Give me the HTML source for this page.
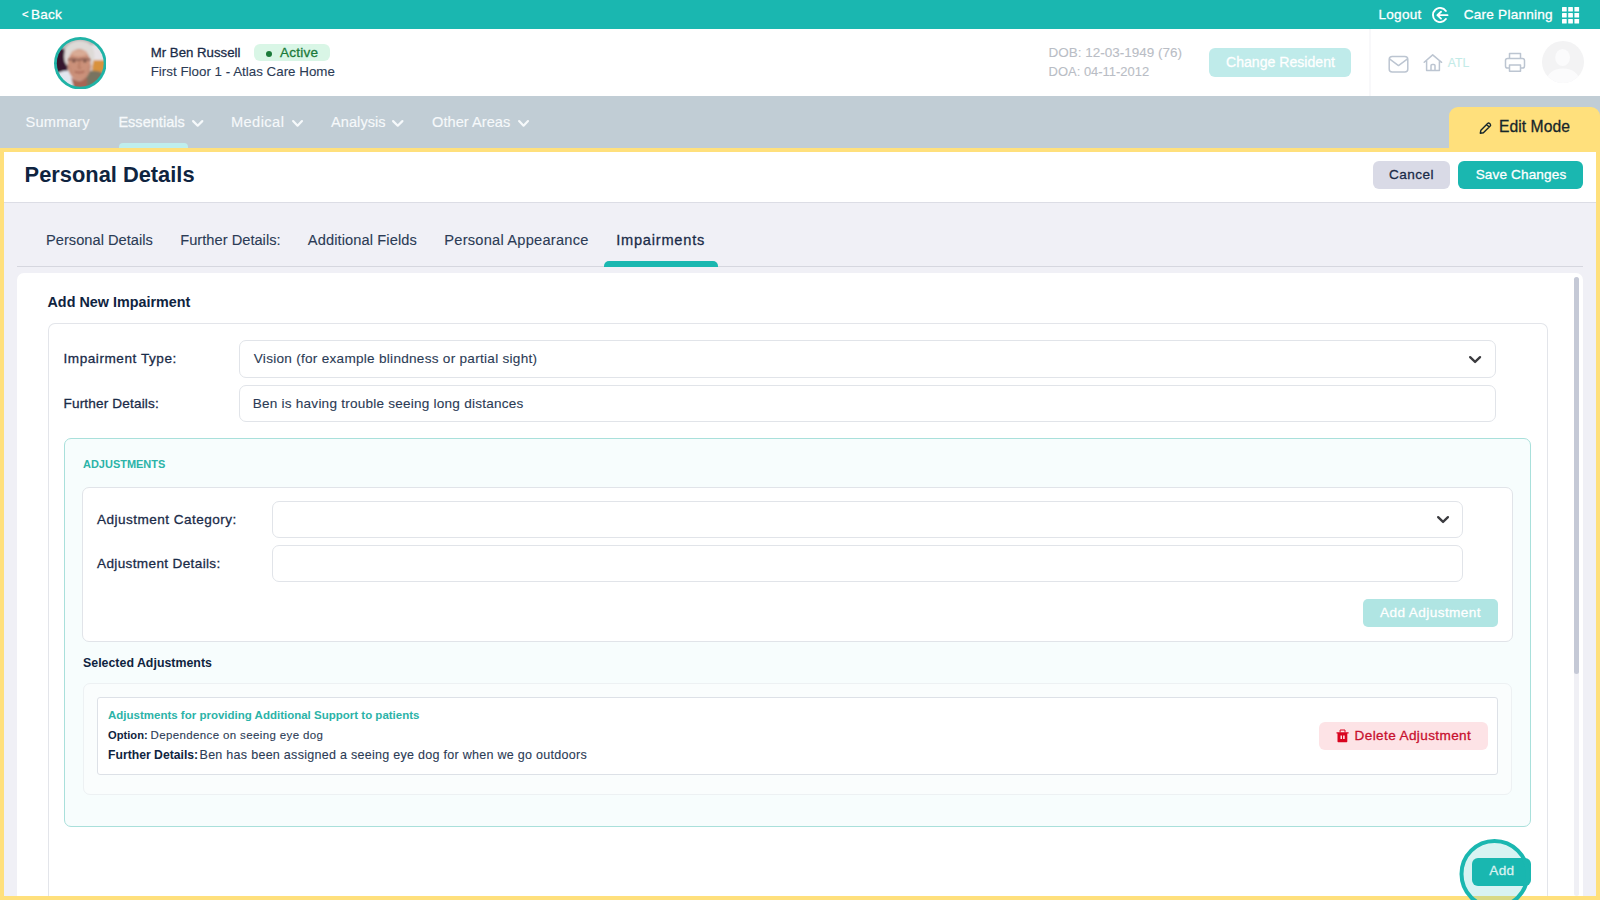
<!DOCTYPE html>
<html lang="en">
<head>
<meta charset="utf-8">
<title>Personal Details - Impairments</title>
<style>
html,body{margin:0;padding:0}
body{width:1600px;height:900px;overflow:hidden;position:relative;background:#f0f0f6;font-family:"Liberation Sans",sans-serif;}
div,span,svg.a,button,header,nav,section,h1,h2,h3,label,a,p,b{position:absolute;box-sizing:border-box;margin:0;padding:0}
.t{line-height:1;white-space:nowrap;display:block}
button{border:0;font:inherit}
.fld{background:#fff;border:1px solid #e1e4e9;border-radius:7px}
</style>
</head>
<body>
<header style="left:0;top:0;width:1600px;height:29px;background:#1ab7b0"><a class="t" style="left:22.00px;top:8.96px;font-size:11.15px;font-weight:400;letter-spacing:0.000px;color:#ffffff;-webkit-text-stroke:0.28px #ffffff;">&lt;</a><a class="t" style="left:31.00px;top:7.60px;font-size:13.58px;font-weight:400;letter-spacing:0.201px;color:#ffffff;-webkit-text-stroke:0.28px #ffffff;">Back</a><a class="t" style="left:1378.50px;top:7.70px;font-size:13.58px;font-weight:400;letter-spacing:0.248px;color:#ffffff;-webkit-text-stroke:0.28px #ffffff;">Logout</a><svg class="a" style="left:1431px;top:7px" width="18" height="16" viewBox="0 0 18 16"><path d="M14.87 3.93 A7.1 7.1 0 1 0 14.87 12.07" fill="none" stroke="#fff" stroke-width="1.9" stroke-linecap="round"/><path d="M16.5 8.15 H7.2 M10 4.7 L6.4 8.15 L10 11.6" fill="none" stroke="#fff" stroke-width="1.9" stroke-linecap="round" stroke-linejoin="round"/></svg><a class="t" style="left:1463.80px;top:7.70px;font-size:13.58px;font-weight:400;letter-spacing:0.225px;color:#ffffff;-webkit-text-stroke:0.28px #ffffff;">Care Planning</a><svg class="a" style="left:1562.2px;top:6.8px" width="18" height="17" viewBox="0 0 18 17"><rect x="0.0" y="0.0" width="4.7" height="4.5" rx="0.5" fill="#fff"/><rect x="0.0" y="6.0" width="4.7" height="4.5" rx="0.5" fill="#fff"/><rect x="0.0" y="12.0" width="4.7" height="4.5" rx="0.5" fill="#fff"/><rect x="6.2" y="0.0" width="4.7" height="4.5" rx="0.5" fill="#fff"/><rect x="6.2" y="6.0" width="4.7" height="4.5" rx="0.5" fill="#fff"/><rect x="6.2" y="12.0" width="4.7" height="4.5" rx="0.5" fill="#fff"/><rect x="12.4" y="0.0" width="4.7" height="4.5" rx="0.5" fill="#fff"/><rect x="12.4" y="6.0" width="4.7" height="4.5" rx="0.5" fill="#fff"/><rect x="12.4" y="12.0" width="4.7" height="4.5" rx="0.5" fill="#fff"/></svg></header>
<section style="left:0;top:29px;width:1600px;height:67px;background:#fff"></section><svg class="a" style="left:53.5px;top:36.8px" width="52.5" height="52.5" viewBox="0 0 52 52">
<defs><clipPath id="av"><circle cx="26" cy="26" r="23.2"/></clipPath><filter id="bl" x="-20%" y="-20%" width="140%" height="140%"><feGaussianBlur stdDeviation="1.1"/></filter><filter id="bl2" x="-30%" y="-30%" width="160%" height="160%"><feGaussianBlur stdDeviation="1.0"/></filter></defs>
<circle cx="26" cy="26" r="26" fill="#1fb3a6"/>
<g clip-path="url(#av)"><g filter="url(#bl)">
<rect x="0" y="0" width="52" height="52" fill="#cfc6c4"/>
<rect x="0" y="0" width="52" height="14" fill="#bdb6b6"/>
<path d="M0 10 L10 12 L14 24 L13 37 L0 41 Z" fill="#34162f"/>
<rect x="36" y="8" width="16" height="16" fill="#e7e3e6"/>
<rect x="38" y="23" width="14" height="12" fill="#d8923c"/>
<path d="M0 52 V38 Q8 32 17 34 L22 52 Z" fill="#e3e7f0"/>
<path d="M26 52 L31 35 Q42 31 52 38 V52 Z" fill="#787361"/>
<path d="M10.5 24 Q7.5 6 24 3.6 Q40.5 3.4 40 20 L38 28 L12.5 28 Z" fill="#dedad7"/>
<ellipse cx="25" cy="27.6" rx="11.4" ry="15.6" fill="#cb917a"/>
<ellipse cx="25" cy="16" rx="8" ry="3.2" fill="#d9ab95"/>
<path d="M17 40 Q25 47 33 40 L32 52 H20 Z" fill="#a86552"/>
</g>
<g filter="url(#bl2)">
<path d="M14 22.6 Q19 21 24 23 Q30 21 36 22.6" fill="none" stroke="#8b5f52" stroke-width="1.8"/>
<ellipse cx="19.6" cy="24" rx="1.6" ry="0.9" fill="#5a3a33"/><ellipse cx="30.6" cy="24" rx="1.6" ry="0.9" fill="#5a3a33"/>
<path d="M25.6 24 L24.4 30.5 L27 30.8" fill="none" stroke="#b67a63" stroke-width="1.6"/>
<path d="M20.5 34.3 Q25 36.3 30 34" fill="none" stroke="#a3604f" stroke-width="1.5"/>
<path d="M15 28 Q16 33 18.5 36 M35 28 Q34.5 33 32 36" fill="none" stroke="#bb846d" stroke-width="0.9"/>
</g></g></svg><b class="t" style="left:150.70px;top:46.11px;font-size:13.22px;font-weight:400;letter-spacing:0.009px;color:#1a2b48;-webkit-text-stroke:0.28px #1a2b48;">Mr Ben Russell</b><div style="left:254px;top:44.3px;width:76px;height:16.900000000000006px;background:#d9f6e6;border-radius:6px"></div><div style="left:266.2px;top:50.6px;width:6.0px;height:6.0px;background:#1b7a3a;border-radius:50%"></div><span class="t" style="left:280.00px;top:45.80px;font-size:13.58px;font-weight:400;letter-spacing:0.235px;color:#1b7a3a;-webkit-text-stroke:0.28px #1b7a3a;">Active</span><span class="t" style="left:150.70px;top:64.99px;font-size:13.35px;font-weight:400;letter-spacing:0.010px;color:#2b3b55;-webkit-text-stroke:0.1px #2b3b55;">First Floor 1 - Atlas Care Home</span><span class="t" style="left:1048.60px;top:45.99px;font-size:13.48px;font-weight:400;letter-spacing:0.012px;color:#b9bdc5;-webkit-text-stroke:0.1px #b9bdc5;">DOB: 12-03-1949 (76)</span><span class="t" style="left:1048.60px;top:65.63px;font-size:12.96px;font-weight:400;letter-spacing:0.003px;color:#b9bdc5;-webkit-text-stroke:0.1px #b9bdc5;">DOA: 04-11-2012</span><button style="left:1209px;top:48px;width:142px;height:28.5px;background:#bfebea;border-radius:6px"></button><span class="t" style="left:1226.00px;top:55.09px;font-size:14.07px;font-weight:400;letter-spacing:0.017px;color:#ffffff;-webkit-text-stroke:0.28px #ffffff;">Change Resident</span><div style="left:1369px;top:29px;width:2px;height:67px;background:#f8f8fa"></div><svg class="a" style="left:1387px;top:54px" width="23" height="20" viewBox="0 0 23 20"><rect x="2.2" y="2.5" width="18.6" height="15.4" rx="3" fill="none" stroke="#bcc5d1" stroke-width="1.5"/><path d="M2.8 5.2 L11.5 11.6 L20.2 5.2" fill="none" stroke="#bcc5d1" stroke-width="1.5" stroke-linejoin="round"/></svg><svg class="a" style="left:1422px;top:53px" width="22" height="20" viewBox="0 0 22 20"><path d="M2.2 9.3 L10.7 1.9 L19.6 9.3 M4.6 7.8 V17.6 H17.4 V8.2 M9 17.4 V12.6 Q9 11.4 10.2 11.4 H11.8 Q13 11.4 13 12.6 V17.4" fill="none" stroke="#bcc5d1" stroke-width="1.5" stroke-linecap="round" stroke-linejoin="round"/></svg><span class="t" style="left:1447.75px;top:56.89px;font-size:12.17px;font-weight:400;letter-spacing:0.060px;color:#c3ebe8;-webkit-text-stroke:0.1px #c3ebe8;">ATL</span><svg class="a" style="left:1503px;top:51px" width="24" height="23" viewBox="0 0 24 23"><path d="M6.5 7.5 V2.5 H17.5 V7.5 M6.5 17 H4.6 Q2.5 17 2.5 14.9 V9.6 Q2.5 7.5 4.6 7.5 H19.4 Q21.5 7.5 21.5 9.6 V14.9 Q21.5 17 19.4 17 H17.5 M6.5 14 H17.5 V20.3 H6.5 Z" fill="none" stroke="#bcc5d1" stroke-width="1.5" stroke-linejoin="round"/></svg><svg class="a" style="left:1541.5px;top:41px" width="42" height="42" viewBox="0 0 42 42"><defs><clipPath id="uc"><circle cx="21" cy="21" r="21"/></clipPath></defs><circle cx="21" cy="21" r="21" fill="#f3f3f4"/><g clip-path="url(#uc)" fill="#fbfbfc"><ellipse cx="20.6" cy="16.5" rx="7.4" ry="8.6"/><path d="M3 46 Q4 27.5 21 27.5 Q38 27.5 39 46 Z"/></g></svg><nav style="left:0;top:96px;width:1600px;height:52px;background:#c1cdd5"></nav><a class="t" style="left:25.40px;top:115.11px;font-size:14.63px;font-weight:400;letter-spacing:0.257px;color:#f6f9fb;-webkit-text-stroke:0.15px #f6f9fb;">Summary</a><a class="t" style="left:118.40px;top:115.21px;font-size:14.51px;font-weight:400;letter-spacing:0.029px;color:#f6f9fb;-webkit-text-stroke:0.28px #f6f9fb;">Essentials</a><a class="t" style="left:230.90px;top:115.11px;font-size:14.63px;font-weight:400;letter-spacing:0.442px;color:#f6f9fb;-webkit-text-stroke:0.15px #f6f9fb;">Medical</a><a class="t" style="left:331.10px;top:115.18px;font-size:14.56px;font-weight:400;letter-spacing:0.044px;color:#f6f9fb;-webkit-text-stroke:0.15px #f6f9fb;">Analysis</a><a class="t" style="left:432.00px;top:115.14px;font-size:14.60px;font-weight:400;letter-spacing:0.040px;color:#f6f9fb;-webkit-text-stroke:0.15px #f6f9fb;">Other Areas</a><svg class="a" style="left:190px;top:118px" width="15.400000000000006" height="10.799999999999997" viewBox="-2 -2 15.400000000000006 10.799999999999997"><path d="M1.1 1.1 L5.700000000000003 5.6999999999999975 L10.300000000000006 1.1" fill="none" stroke="#f6f9fb" stroke-width="2.2" stroke-linecap="round" stroke-linejoin="round"/></svg><svg class="a" style="left:289.8px;top:118px" width="15.099999999999966" height="10.799999999999997" viewBox="-2 -2 15.099999999999966 10.799999999999997"><path d="M1.1 1.1 L5.549999999999983 5.6999999999999975 L9.999999999999966 1.1" fill="none" stroke="#f6f9fb" stroke-width="2.2" stroke-linecap="round" stroke-linejoin="round"/></svg><svg class="a" style="left:390.3px;top:118px" width="15.5" height="10.799999999999997" viewBox="-2 -2 15.5 10.799999999999997"><path d="M1.1 1.1 L5.75 5.6999999999999975 L10.4 1.1" fill="none" stroke="#f6f9fb" stroke-width="2.2" stroke-linecap="round" stroke-linejoin="round"/></svg><svg class="a" style="left:516.1px;top:118px" width="15.100000000000023" height="10.799999999999997" viewBox="-2 -2 15.100000000000023 10.799999999999997"><path d="M1.1 1.1 L5.550000000000011 5.6999999999999975 L10.000000000000023 1.1" fill="none" stroke="#f6f9fb" stroke-width="2.2" stroke-linecap="round" stroke-linejoin="round"/></svg><div style="left:118.5px;top:143px;width:69.69999999999999px;height:5px;background:#bfeeed;border-radius:4px 4px 0 0"></div><div style="left:1449px;top:106.5px;width:151px;height:45.5px;background:#ffe07c;border-radius:9px 9px 0 0"></div><svg class="a" style="left:1478px;top:121px" width="15" height="14" viewBox="0 0 15 14"><path d="M2.3 12.2 L2.9 9.2 L9.6 2.5 Q10.6 1.6 11.6 2.5 L12.2 3.1 Q13.1 4.1 12.2 5.1 L5.4 11.7 Z M8.6 3.6 L11.1 6.1" fill="none" stroke="#16262b" stroke-width="1.4" stroke-linejoin="round" stroke-linecap="round"/></svg><span class="t" style="left:1499.00px;top:119.44px;font-size:15.66px;font-weight:400;letter-spacing:0.047px;color:#16262b;-webkit-text-stroke:0.28px #16262b;">Edit Mode</span><div style="left:0px;top:148px;width:1600px;height:752px;border:4px solid #ffe07c;background:#f0f0f6"></div><div style="left:4px;top:152px;width:1592px;height:50.5px;background:#fff;border-bottom:1px solid #dcdde5"></div><h1 class="t" style="left:24.60px;top:163.50px;font-size:21.85px;font-weight:700;letter-spacing:-0.002px;color:#0f2440;">Personal Details</h1><button style="left:1372.5px;top:161px;width:77.5px;height:28px;background:#d9dae6;border-radius:6px"></button><span class="t" style="left:1389.00px;top:168.30px;font-size:13.58px;font-weight:400;letter-spacing:0.430px;color:#1a2b48;-webkit-text-stroke:0.28px #1a2b48;">Cancel</span><button style="left:1458px;top:161px;width:125.29999999999995px;height:28px;background:#1ab7b0;border-radius:6px"></button><span class="t" style="left:1475.70px;top:168.30px;font-size:13.58px;font-weight:400;letter-spacing:0.129px;color:#ffffff;-webkit-text-stroke:0.28px #ffffff;">Save Changes</span><a class="t" style="left:46.00px;top:232.61px;font-size:14.63px;font-weight:400;letter-spacing:0.022px;color:#2b3b55;-webkit-text-stroke:0.1px #2b3b55;">Personal Details</a><a class="t" style="left:180.25px;top:232.61px;font-size:14.63px;font-weight:400;letter-spacing:0.023px;color:#2b3b55;-webkit-text-stroke:0.1px #2b3b55;">Further Details:</a><a class="t" style="left:307.80px;top:232.61px;font-size:14.63px;font-weight:400;letter-spacing:0.106px;color:#2b3b55;-webkit-text-stroke:0.1px #2b3b55;">Additional Fields</a><a class="t" style="left:444.30px;top:232.61px;font-size:14.63px;font-weight:400;letter-spacing:0.232px;color:#2b3b55;-webkit-text-stroke:0.1px #2b3b55;">Personal Appearance</a><a class="t" style="left:616.20px;top:232.61px;font-size:14.63px;font-weight:400;letter-spacing:0.765px;color:#1a2b48;-webkit-text-stroke:0.28px #1a2b48;">Impairments</a><div style="left:17px;top:265.8px;width:1566px;height:1.5px;background:#d6d7df"></div><div style="left:604px;top:261.3px;width:113.5px;height:6.0px;background:#1ab7b0;border-radius:5px 5px 0 0"></div><div style="left:17px;top:272.5px;width:1566px;height:623.5px;background:#fff;border-radius:7px 7px 0 0"></div><div style="left:1574px;top:277px;width:5.2000000000000455px;height:619px;background:#f0f0f5;border-radius:3px"></div><div style="left:1574px;top:277.3px;width:5.2000000000000455px;height:396.3px;background:#c5c9d6;border-radius:3px"></div><h2 class="t" style="left:47.50px;top:294.61px;font-size:14.34px;font-weight:700;letter-spacing:0.016px;color:#0f2440;">Add New Impairment</h2><div style="left:47.5px;top:322.6px;width:1500.5px;height:573.4px;border:1px solid #e3e5ea;border-bottom:0;border-radius:7px 7px 0 0"></div><label class="t" style="left:63.50px;top:352.25px;font-size:13.58px;font-weight:400;letter-spacing:0.542px;color:#1a2b48;-webkit-text-stroke:0.28px #1a2b48;">Impairment Type:</label><div class="fld" style="left:239px;top:340px;width:1256.5px;height:37.60000000000002px;"></div><span class="t" style="left:253.75px;top:352.25px;font-size:13.58px;font-weight:400;letter-spacing:0.274px;color:#2b3b55;-webkit-text-stroke:0.1px #2b3b55;">Vision (for example blindness or partial sight)</span><svg class="a" style="left:1467px;top:353.7px" width="16.200000000000045" height="11.100000000000023" viewBox="-2 -2 16.200000000000045 11.100000000000023"><path d="M1.15 1.15 L6.100000000000023 5.950000000000022 L11.050000000000045 1.15" fill="none" stroke="#3b3b3f" stroke-width="2.3" stroke-linecap="round" stroke-linejoin="round"/></svg><label class="t" style="left:63.50px;top:396.50px;font-size:13.58px;font-weight:400;letter-spacing:0.164px;color:#1a2b48;-webkit-text-stroke:0.28px #1a2b48;">Further Details:</label><div class="fld" style="left:239px;top:384.5px;width:1256.5px;height:37.5px;"></div><span class="t" style="left:252.75px;top:396.50px;font-size:13.58px;font-weight:400;letter-spacing:0.223px;color:#2b3b55;-webkit-text-stroke:0.1px #2b3b55;">Ben is having trouble seeing long distances</span><div style="left:64.3px;top:438.3px;width:1466.9px;height:388.49999999999994px;border:1.5px solid #a9e0db;background:#f7fdfd;border-radius:7px"></div><h3 class="t" style="left:83.00px;top:459.46px;font-size:10.98px;font-weight:700;letter-spacing:0.005px;color:#2bb3a8;">ADJUSTMENTS</h3><div style="left:82.3px;top:486.8px;width:1430.4px;height:154.90000000000003px;border:1px solid #e1e4e9;background:#fff;border-radius:7px"></div><label class="t" style="left:97.00px;top:512.75px;font-size:13.58px;font-weight:400;letter-spacing:0.458px;color:#1a2b48;-webkit-text-stroke:0.28px #1a2b48;">Adjustment Category:</label><div class="fld" style="left:272px;top:501px;width:1191px;height:36.60000000000002px;"></div><svg class="a" style="left:1434.5px;top:514.3px" width="16.09999999999991" height="11.100000000000023" viewBox="-2 -2 16.09999999999991 11.100000000000023"><path d="M1.15 1.15 L6.0499999999999545 5.950000000000022 L10.949999999999909 1.15" fill="none" stroke="#3b3b3f" stroke-width="2.3" stroke-linecap="round" stroke-linejoin="round"/></svg><label class="t" style="left:97.00px;top:556.75px;font-size:13.58px;font-weight:400;letter-spacing:0.350px;color:#1a2b48;-webkit-text-stroke:0.28px #1a2b48;">Adjustment Details:</label><div class="fld" style="left:272px;top:545.4px;width:1191px;height:36.60000000000002px;"></div><button style="left:1362.5px;top:599px;width:135.9000000000001px;height:28.200000000000045px;background:#b0e5e3;border-radius:5px"></button><span class="t" style="left:1380.00px;top:606.10px;font-size:13.58px;font-weight:400;letter-spacing:0.417px;color:#ffffff;-webkit-text-stroke:0.28px #ffffff;">Add Adjustment</span><h3 class="t" style="left:83.00px;top:657.03px;font-size:12.36px;font-weight:700;letter-spacing:0.013px;color:#0f2440;">Selected Adjustments</h3><div style="left:82.7px;top:682.7px;width:1429.6px;height:112.5px;border:1px solid #edf1f3;background:#fafdfd;border-radius:7px"></div><div style="left:96.8px;top:697px;width:1401.0px;height:77.60000000000002px;border:1px solid #dde1e7;background:#fff;border-radius:3px"></div><span class="t" style="left:108.00px;top:709.77px;font-size:11.49px;font-weight:700;letter-spacing:0.010px;color:#2bb3a8;">Adjustments for providing Additional Support to patients</span><b class="t" style="left:108.00px;top:730.05px;font-size:11.16px;font-weight:700;letter-spacing:0.011px;color:#0f2440;">Option:</b><span class="t" style="left:150.50px;top:729.77px;font-size:11.49px;font-weight:400;letter-spacing:0.378px;color:#2b3b55;-webkit-text-stroke:0.1px #2b3b55;">Dependence on seeing eye dog</span><b class="t" style="left:108.00px;top:748.94px;font-size:12.18px;font-weight:700;letter-spacing:0.014px;color:#0f2440;">Further Details:</b><span class="t" style="left:199.50px;top:748.63px;font-size:12.54px;font-weight:400;letter-spacing:0.273px;color:#2b3b55;-webkit-text-stroke:0.1px #2b3b55;">Ben has been assigned a seeing eye dog for when we go outdoors</span><button style="left:1319.4px;top:721.6px;width:168.79999999999995px;height:28.100000000000023px;background:#fde3e6;border-radius:6px"></button><svg class="a" style="left:1335.5px;top:728.5px" width="13" height="14" viewBox="0 0 13 14"><path fill-rule="evenodd" fill="#d9041f" d="M0.5 3.3 H12.6 V4.6 H0.5Z M1.5 4.4 H11.3 V12.6 Q11.3 13.25 10.6 13.25 H2.2 Q1.5 13.25 1.5 12.6Z M4.5 6.5 V10.1 H6 V6.5Z M7.1 6.5 V10.1 H8.7 V6.5Z"/><path d="M4.1 3.5 V1 H9 V3.5" fill="none" stroke="#d9041f" stroke-width="1"/></svg><span class="t" style="left:1354.60px;top:728.80px;font-size:13.58px;font-weight:400;letter-spacing:0.377px;color:#c8102e;-webkit-text-stroke:0.28px #c8102e;">Delete Adjustment</span><button style="left:1471.8px;top:857.6px;width:59.0px;height:28.0px;background:#1ab7b0;border-radius:6px"></button><span class="t" style="left:1489.20px;top:864.10px;font-size:13.58px;font-weight:400;letter-spacing:0.396px;color:#ffffff;-webkit-text-stroke:0.28px #ffffff;">Add</span><svg class="a" style="left:1455px;top:834px" width="80" height="66" viewBox="0 0 80 66"><circle cx="39.5" cy="40" r="33" fill="rgba(26,183,176,0.17)" stroke="#1ab7b0" stroke-width="4"/></svg>
</body>
</html>
